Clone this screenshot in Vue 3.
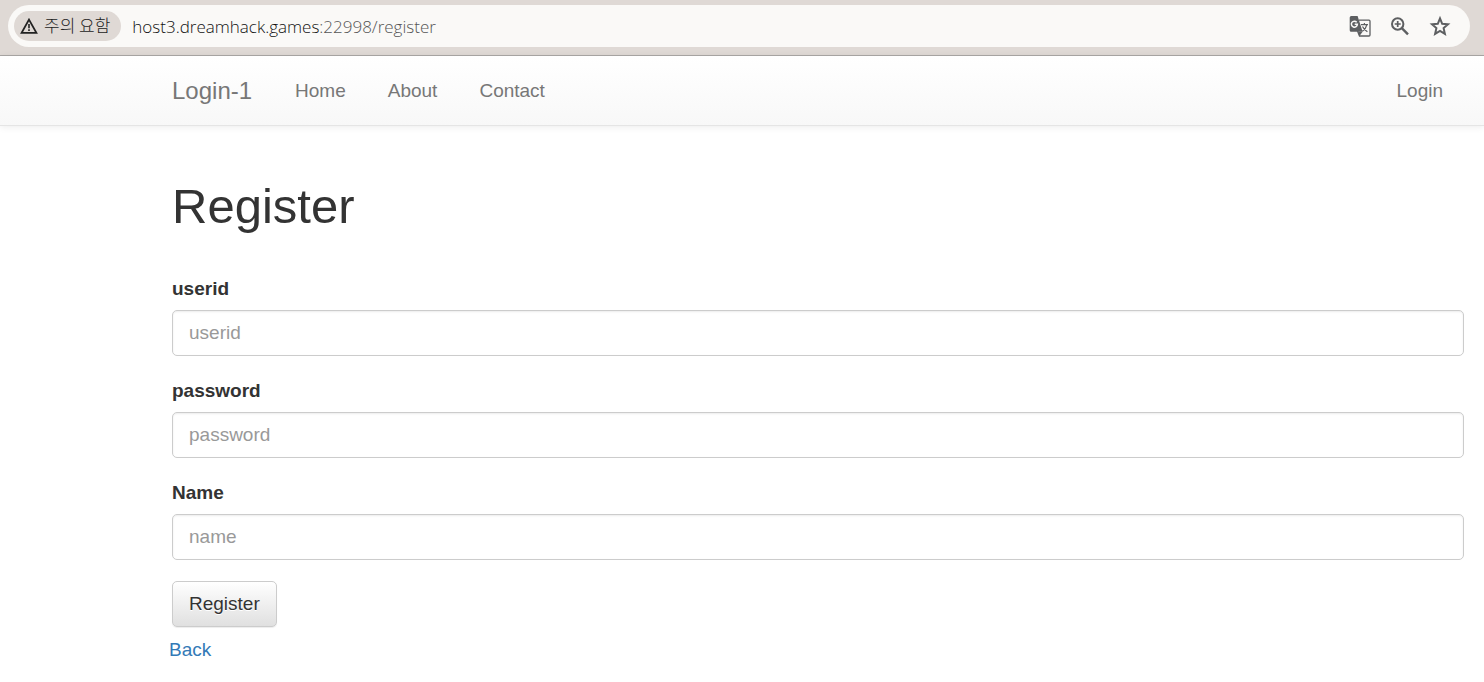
<script setup>
import { reactive } from 'vue'

const links = ['Home', 'About', 'Contact']
const fields = [
  { key: 'userid', label: 'userid', placeholder: 'userid', type: 'text' },
  { key: 'password', label: 'password', placeholder: 'password', type: 'password' },
  { key: 'name', label: 'Name', placeholder: 'name', type: 'text' },
]
const form = reactive({ userid: '', password: '', name: '' })
</script>

<template>
  <div class="page">
    <div class="toolbar">
      <div class="omnibox">
        <button type="button" class="chip">
          <svg width="18" height="16" viewBox="0 0 18 16" aria-hidden="true">
            <path d="M9 1.6 16.4 14.9H1.6Z" fill="none" stroke="#222" stroke-width="1.8" />
            <path d="M9 6v4.2M9 11.3v1.8" stroke="#222" stroke-width="1.6" />
          </svg>
          <span>주의 요함</span>
        </button>
        <div class="url">host3.dreamhack.games<span class="path">:22998/register</span></div>
        <div class="tools">
          <button type="button" class="tool" aria-label="Translate">
            <svg width="22" height="22" viewBox="0 0 22 22" fill="none">
              <path d="M10 5.2H20a1 1 0 0 1 1 1V20a1 1 0 0 1-1 1H10.5L8.5 16" stroke="#5d5f61" stroke-width="1.3" />
              <path d="M2.2 1H8.6L13.6 16.8H2.2A1.5 1.5 0 0 1 .7 15.3V2.5A1.5 1.5 0 0 1 2.2 1Z" fill="#5d5f61" />
              <path d="M7.700 7.200A3 3 0 1 0 8.400 9.300H5.700" stroke="#faf9f7" stroke-width="1.500" />
              <path d="M12 9.6H19M15.4 8V9.6M17.8 9.8C17.2 12.8 15.5 14.7 13.4 16.2M13.5 11.4C14.6 13.6 16.400 15.500 18.400 16.800" stroke="#5d5f61" stroke-width="1.2" />
              <path d="M10.5 21 13.6 16.8H9Z" fill="#5d5f61" />
            </svg>
          </button>
          <button type="button" class="tool" aria-label="Zoom">
            <svg width="22" height="22" viewBox="0 0 22 22" fill="none" stroke="#5d5f61">
              <circle cx="8.7" cy="9" r="5.7" stroke-width="2" />
              <path d="M12.8 13.1 19 19.3" stroke-width="2.4" />
              <path d="M8.7 6v6M5.700 9h6" stroke-width="1.7" />
            </svg>
          </button>
          <button type="button" class="tool" aria-label="Bookmark">
            <svg width="22" height="22" viewBox="0 0 22 22" fill="none">
              <path d="M11 3.4 13.2 8.8 19 9.300 14.600 13.100 15.900 18.900 11 15.900 6.100 18.900 7.400 13.100 3 9.300 8.800 8.800Z" stroke="#5d5f61" stroke-width="2" />
            </svg>
          </button>
        </div>
      </div>
    </div>

    <nav class="navbar">
      <a href="#" class="brand">Login-1</a>
      <a v-for="link in links" :key="link" href="#" class="link">{{ link }}</a>
      <a href="#" class="link login">Login</a>
    </nav>

    <main class="content">
      <h1>Register</h1>
      <form @submit.prevent>
        <div v-for="f in fields" :key="f.key" class="group">
          <label :for="f.key">{{ f.label }}</label>
          <input :id="f.key" v-model="form[f.key]" :type="f.type" :placeholder="f.placeholder" autocomplete="off" />
        </div>
        <button type="submit" class="submit">Register</button>
      </form>
      <a href="#" class="back">Back</a>
    </main>
  </div>
</template>

<style>
body {
  background: #fff;
}
</style>

<style scoped>
.page {
  font-family: "Liberation Sans", Arial, sans-serif;
  font-size: 19px;
  line-height: 27px;
  color: #333;
}
.page *,
.page {
  box-sizing: border-box;
}
a {
  text-decoration: none;
}
.toolbar {
  padding: 5px 14px 8px 8px;
  background: #dfd9d5;
  border-bottom: 1px solid #aaa7a5;
}
.omnibox {
  display: flex;
  align-items: center;
  height: 42px;
  padding: 0 19px 0 6px;
  border-radius: 21px;
  background: #faf9f7;
}
.chip {
  display: flex;
  align-items: center;
  gap: 6px;
  height: 30px;
  padding: 0 11px 0 6px;
  border: 0;
  border-radius: 15px;
  background: #dfd9d5;
  color: #222;
  font-family: "Noto Sans CJK KR", sans-serif;
  font-size: 17px;
  font-weight: 300;
  line-height: 24px;
  white-space: nowrap;
}
.chip span {
  padding-bottom: 3px;
}
.url {
  flex: 1;
  padding-left: 11px;
  font-family: "Open Sans", "Noto Sans", sans-serif;
  font-size: 17px;
  font-weight: 300;
  color: #111;
  white-space: nowrap;
}
.path {
  color: #555;
}
.tools {
  display: flex;
  gap: 18px;
}
.tool {
  display: flex;
  padding: 0;
  border: 0;
  background: none;
}
.navbar {
  display: flex;
  align-items: center;
  height: 70px;
  padding: 0 20px 0 172px;
  background: linear-gradient(#fff, #f8f8f8);
  border-bottom: 1px solid #e5e5e5;
  box-shadow: 0 1px 7px rgba(0, 0, 0, 0.08);
}
.brand {
  margin-right: 22px;
  font-size: 24px;
  color: #777;
}
.link {
  padding: 0 21px;
  color: #777;
}
.login {
  margin-left: auto;
}
.content {
  padding: 53px 20px 16px 172px;
}
h1 {
  margin: 0 0 42px;
  font-size: 49px;
  font-weight: 500;
  line-height: 54px;
}
.group {
  margin-bottom: 21px;
}
label {
  display: block;
  margin-bottom: 8px;
  font-weight: 700;
}
input {
  display: block;
  width: 100%;
  height: 46px;
  padding: 0 16px;
  border: 1px solid #ccc;
  border-radius: 5px;
  background: #fff;
  box-shadow: inset 0 1px 2px rgba(0, 0, 0, 0.075);
  color: #555;
  font-family: inherit;
  font-size: 19px;
}
input::placeholder {
  color: #999;
  opacity: 1;
}
.submit {
  display: block;
  height: 46px;
  padding: 0 16px;
  border: 1px solid #ccc;
  border-radius: 5px;
  background: linear-gradient(#fff, #e0e0e0);
  box-shadow: inset 0 1px 0 rgba(255, 255, 255, 0.15), 0 1px 1px rgba(0, 0, 0, 0.075);
  text-shadow: 0 1px 0 #fff;
  color: #333;
  font-family: inherit;
  font-size: 19px;
}
.back {
  display: inline-block;
  margin: 9px 0 0 -3px;
  color: #337ab7;
}
</style>
